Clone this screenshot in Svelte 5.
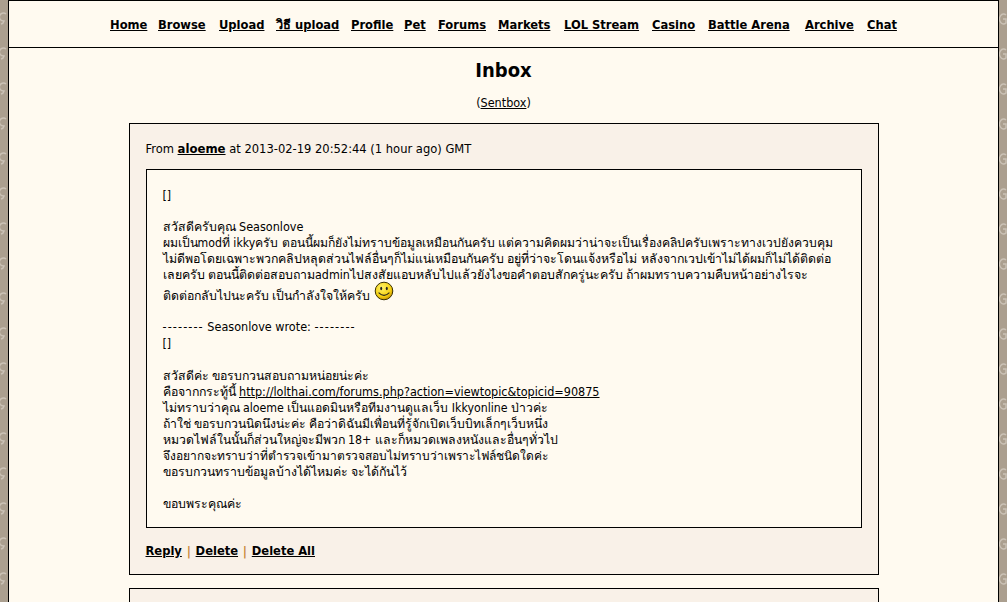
<script lang="ts">
    const navLinks = [
        { label: 'Home', width: 48 },
        { label: 'Browse', width: 61 },
        { label: 'Upload', width: 57 },
        { label: 'วิธี upload', width: 75 },
        { label: 'Profile', width: 53 },
        { label: 'Pet', width: 34 },
        { label: 'Forums', width: 60 },
        { label: 'Markets', width: 66 },
        { label: 'LOL Stream', width: 88 },
        { label: 'Casino', width: 56 },
        { label: 'Battle Arena', width: 97 },
        { label: 'Archive', width: 62 },
        { label: 'Chat', width: 30 }
    ];

    const replyLines = [
        { text: 'ผมเป็นmodที่ ikkyครับ ตอนนี้ผมก็ยังไม่ทราบข้อมูลเหมือนกันครับ แต่ความคิดผมว่าน่าจะเป็นเรื่องคลิปครับเพราะทางเวปยังควบคุม', size: 12.2 },
        { text: 'ไม่ดีพอโดยเฉพาะพวกคลิปหลุดส่วนไฟล์อื่นๆก็ไม่แน่เหมือนกันครับ อยู่ที่ว่าจะโดนแจ้งหรือไม่ หลังจากเวปเข้าไม่ได้ผมก็ไม่ได้ติดต่อ', size: 12.35 },
        { text: 'เลยครับ ตอนนี้ติดต่อสอบถามadminไปสงสัยแอบหลับไปแล้วยังไงขอคำตอบสักครู่นะครับ ถ้าผมทราบความคืบหน้าอย่างไรจะ', size: 12.37 }
    ];

    const quoteLines = [
        { text: 'ไม่ทราบว่าคุณ aloeme เป็นแอดมินหรือทีมงานดูแลเว็บ Ikkyonline ป่าวค่ะ', size: 12.25 },
        { text: 'ถ้าใช่ ขอรบกวนนิดนึงน่ะค่ะ คือว่าดิฉันมีเพื่อนที่รู้จักเปิดเว็บบิทเล็กๆเว็บหนึ่ง', size: 12.25 },
        { text: 'หมวดไฟล์ในนั้นก็ส่วนใหญ่จะมีพวก 18+ และก็หมวดเพลงหนังและอื่นๆทั่วไป', size: 12.3 },
        { text: 'จึงอยากจะทราบว่าที่ตำรวจเข้ามาตรวจสอบไม่ทราบว่าเพราะไฟล์ชนิดใดค่ะ', size: 12 },
        { text: 'ขอรบกวนทราบข้อมูลบ้างได้ไหมค่ะ จะได้กันไว้', size: 12.3 }
    ];
</script>

<div class="page">
    <nav class="topnav">
        {#each navLinks as link}
            <a href="#nav" class="nav-link" style="width: {link.width}px">{link.label}</a>
        {/each}
    </nav>

    <main class="content">
        <h1>Inbox</h1>
        <p class="sentbox">(<a href="#sent">Sentbox</a>)</p>

        <section class="message">
            <p class="from">From <a href="#user" class="strong">aloeme</a> at 2013-02-19 20:52:44 (1 hour ago) GMT</p>
            <div class="body">
                <p>[]</p>
                <p class="gap">สวัสดีครับคุณ <span class="latin">Seasonlove</span></p>
                {#each replyLines as line}
                    <p style="font-size: {line.size}px">{line.text}</p>
                {/each}
                <p class="smile-line">ติดต่อกลับไปนะครับ เป็นกำลังใจให้ครับ
                    <svg class="smiley" viewBox="0 0 20 20" width="20" height="20" aria-hidden="true">
                        <defs>
                            <radialGradient id="smile-face" cx="40%" cy="32%" r="70%">
                                <stop offset="0" stop-color="#fff36a" />
                                <stop offset="0.7" stop-color="#f5cf10" />
                                <stop offset="1" stop-color="#c99500" />
                            </radialGradient>
                        </defs>
                        <circle cx="10" cy="10" r="8.8" fill="url(#smile-face)" stroke="#3a3000" stroke-width="1" />
                        <ellipse cx="7.2" cy="7.5" rx="1" ry="1.7" fill="#222" />
                        <ellipse cx="12.8" cy="7.5" rx="1" ry="1.7" fill="#222" />
                        <path d="M4.6 11.6 Q10 17 15.4 11.6" fill="none" stroke="#222" stroke-width="1.1" />
                    </svg>
                </p>
                <p class="gap latin"><span class="dashes">--------</span> Seasonlove wrote: <span class="dashes">--------</span></p>
                <p>[]</p>
                <p class="gap wide">สวัสดีค่ะ ขอรบกวนสอบถามหน่อยน่ะค่ะ</p>
                <p>คือจากกระทู้นี้ <a href="#topic" class="latin">http://lolthai.com/forums.php?action=viewtopic&amp;topicid=90875</a></p>
                {#each quoteLines as line}
                    <p style="font-size: {line.size}px">{line.text}</p>
                {/each}
                <p class="gap">ขอบพระคุณค่ะ</p>
            </div>
            <p class="actions">
                <a href="#reply">Reply</a><span>|</span><a href="#delete">Delete</a><span>|</span><a href="#deleteall">Delete All</a>
            </p>
        </section>

        <section class="message next"></section>
    </main>
</div>

<style>
    :global(html), :global(body) {
        height: 100%;
        overflow: hidden;
    }

    :global(body) {
        background-color: #ab9f8f;
        background-image: url("data:image/svg+xml,%3Csvg xmlns='http://www.w3.org/2000/svg' width='35' height='35'%3E%3Cpath d='M6 14a4 4 0 1 0 -2 7a4 4 0 0 1 -3 3' fill='none' stroke='%23cbc2b6' stroke-width='1.4'/%3E%3Cpath d='M26 15a4 5 0 1 0 0 8v-4h-3' fill='none' stroke='%23cbc2b6' stroke-width='1.4'/%3E%3C/svg%3E");
        font-family: "DejaVu Sans Condensed", "DejaVu Sans", "Noto Sans", sans-serif;
        font-size: 12.5px;
        color: #000;
    }

    .page {
        margin: 0 8px;
        height: 602px;
        box-sizing: border-box;
        background: #fffaf0;
        border-left: 1px solid #000;
        border-right: 1px solid #000;
        border-top: 1px solid #000;
        overflow: hidden;
    }

    a {
        color: #000;
        text-decoration: underline;
    }

    .topnav {
        display: flex;
        justify-content: center;
        align-items: center;
        height: 46px;
        border-bottom: 1px solid #000;
        font-size: 12.8px;
        font-weight: bold;
    }

    .nav-link {
        text-align: left;
        white-space: nowrap;
    }

    .content {
        display: flex;
        flex-direction: column;
        align-items: center;
    }

    h1 {
        margin: 10px 0 0;
        font-size: 20px;
        line-height: 24px;
        font-weight: bold;
    }

    .sentbox {
        margin: 13px 0 0;
        line-height: 16px;
    }

    .message {
        box-sizing: border-box;
        width: 750px;
        margin-top: 12px;
        padding: 16px 16px 15px;
        background: #f9f1e8;
        border: 1px solid #000;
    }

    .from {
        margin: 0 0 11px;
        font-size: 12.8px;
        line-height: 18px;
    }

    .strong {
        font-size: 13px;
        font-weight: bold;
    }

    .body {
        padding: 17px 16px 15px;
        background: #fffaf0;
        border: 1px solid #000;
        font-size: 12.3px;
        line-height: 16px;
    }

    .body p {
        margin: 0;
        white-space: nowrap;
    }

    .body .gap {
        margin-top: 16px;
    }

    .body .wide {
        margin-top: 17px;
    }

    .latin {
        font-size: 12.5px;
    }

    .dashes {
        letter-spacing: 1.1px;
    }

    .smiley {
        vertical-align: -1px;
    }

    .body .smile-line {
        margin-top: -2px;
        height: 22px;
        font-size: 12.3px;
    }

    .actions {
        margin: 15px 0 0;
        font-size: 12.8px;
        font-weight: bold;
        line-height: 16px;
    }

    .actions span {
        margin: 0 4.75px;
        color: #c8883a;
        font-weight: bold;
    }

    .next {
        margin-top: 13px;
        height: 60px;
    }
</style>
